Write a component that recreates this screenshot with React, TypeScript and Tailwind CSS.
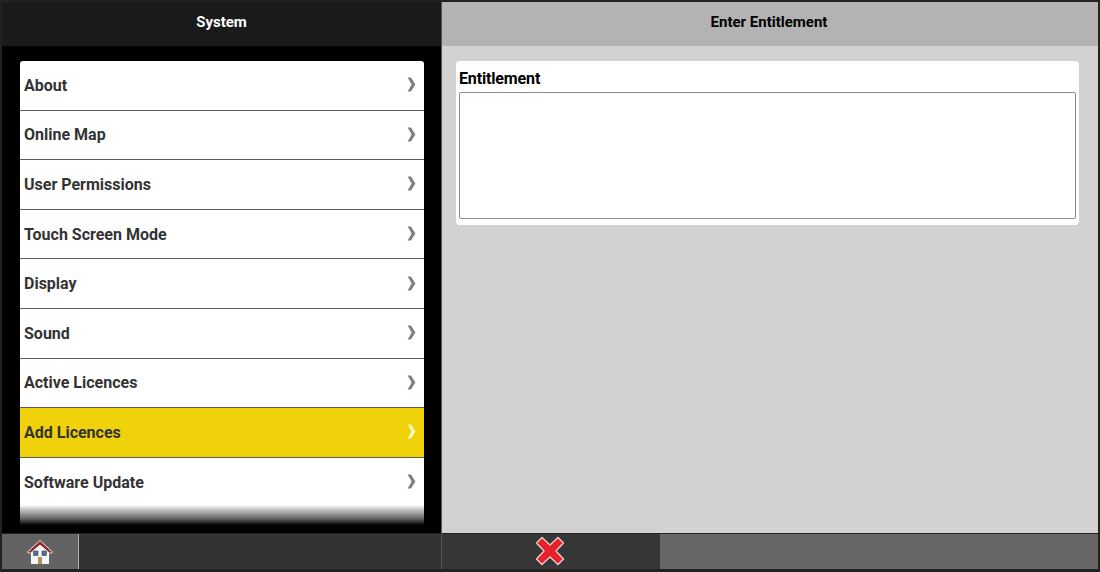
const items = [
  "About",
  "Online Map",
  "User Permissions",
  "Touch Screen Mode",
  "Display",
  "Sound",
  "Active Licences",
  "Add Licences",
  "Software Update",
];

function Chevron({ active }: { active: boolean }) {
  return (
    <svg width="9" height="15" viewBox="0 0 9 15" className="shrink-0 -mt-[2px]">
      <path d="M0.6 0.5 L4 0.5 L8.4 7.5 L4 14.5 L0.6 14.5 L4.6 7.5 Z" fill={active ? "#fff8c4" : "#808080"} />
    </svg>
  );
}

function HomeIcon() {
  return (
    <svg width="28" height="28" viewBox="0 0 28 28">
      <path d="M5 12 L14 5 L23 12 L23 26 L5 26 Z" fill="#f6f6f6" />
      <path d="M1.5 14 L14 2.5 L26.5 14 L24 15.5 L14 7 L4 15.5 Z" fill="#8f2a2a" stroke="#f1e4e0" strokeWidth="1" />
      <rect x="7.5" y="13" width="4.5" height="4.5" fill="#4f6f96" stroke="#39465a" strokeWidth="0.6" />
      <rect x="16" y="13" width="4.5" height="4.5" fill="#4f6f96" stroke="#39465a" strokeWidth="0.6" />
      <rect x="12" y="19" width="4" height="7" fill="#b08d63" />
    </svg>
  );
}

function CloseIcon() {
  return (
    <svg width="30" height="30" viewBox="0 0 30 30">
      <path
        d="M7 1.5 L15 9 L23 1.5 L28.5 7 L21 15 L28.5 23 L23 28.5 L15 21 L7 28.5 L1.5 23 L9 15 L1.5 7 Z"
        fill="#e8202c"
        stroke="#f0d8d8"
        strokeWidth="1.2"
        strokeLinejoin="round"
      />
    </svg>
  );
}

export default function App() {
  return (
    <div className="w-[1100px] h-[572px] overflow-hidden border-2 border-b-[3px] border-[#222222] bg-black flex font-['Roboto','Liberation_Sans',sans-serif]">
      {/* System menu */}
      <div className="w-[440px] h-full flex flex-col border-r border-[#555555]">
        <div className="h-[44px] shrink-0 bg-[#1a1a1a] flex items-center justify-center text-white text-[15px] font-bold pb-1">
          System
        </div>
        <div className="flex-1 min-h-0 bg-black pt-[15px] pl-[18px] pr-[17px] overflow-hidden relative">
          <div className="rounded-t-[3px] overflow-hidden h-full">
            {items.map((item) => {
              const active = item === "Add Licences";
              return (
                <div
                  key={item}
                  className={`h-[49.6px] flex items-center justify-between pl-1 pr-2 pt-px border-b border-[#5c5c5c] text-base font-bold text-[#333333] ${
                    active ? "bg-[#f0d20a]" : "bg-white"
                  }`}
                >
                  <span>{item}</span>
                  <Chevron active={active} />
                </div>
              );
            })}
          </div>
          <div className="absolute left-[18px] right-[17px] bottom-[6px] h-[21px] bg-gradient-to-b from-[#eeeeee] via-[#666666] via-60% to-black" />
        </div>
        <div className="h-[36px] shrink-0 bg-[#333333] flex border-t border-[#222222]">
          <div className="w-[77px] bg-[#636363] border-r border-[#b0b0b0] flex items-center justify-center">
            <HomeIcon />
          </div>
        </div>
      </div>

      {/* Enter Entitlement */}
      <div className="flex-1 h-full flex flex-col bg-[#d2d2d2]">
        <div className="h-[44px] shrink-0 bg-[#b3b3b3] flex items-center justify-center text-black text-[15px] font-bold pb-1 pr-[2px]">
          Enter Entitlement
        </div>
        <div className="flex-1 min-h-0 pt-[15px] pl-[14px] pr-[19px]">
          <div className="bg-white rounded-[4px] px-[3px] pb-[6px] pt-2">
            <div className="text-base font-bold text-black leading-[19px] mb-1 tracking-[-0.15px]">Entitlement</div>
            <div className="h-[127px] bg-white border border-[#8c8c8c] rounded-[2px]" />
          </div>
        </div>
        <div className="h-[36px] shrink-0 bg-[#666666] flex border-t border-[#222222]">
          <div className="w-[218px] bg-[#373737] flex items-center justify-center pr-[2px] pb-px">
            <CloseIcon />
          </div>
        </div>
      </div>
    </div>
  );
}
